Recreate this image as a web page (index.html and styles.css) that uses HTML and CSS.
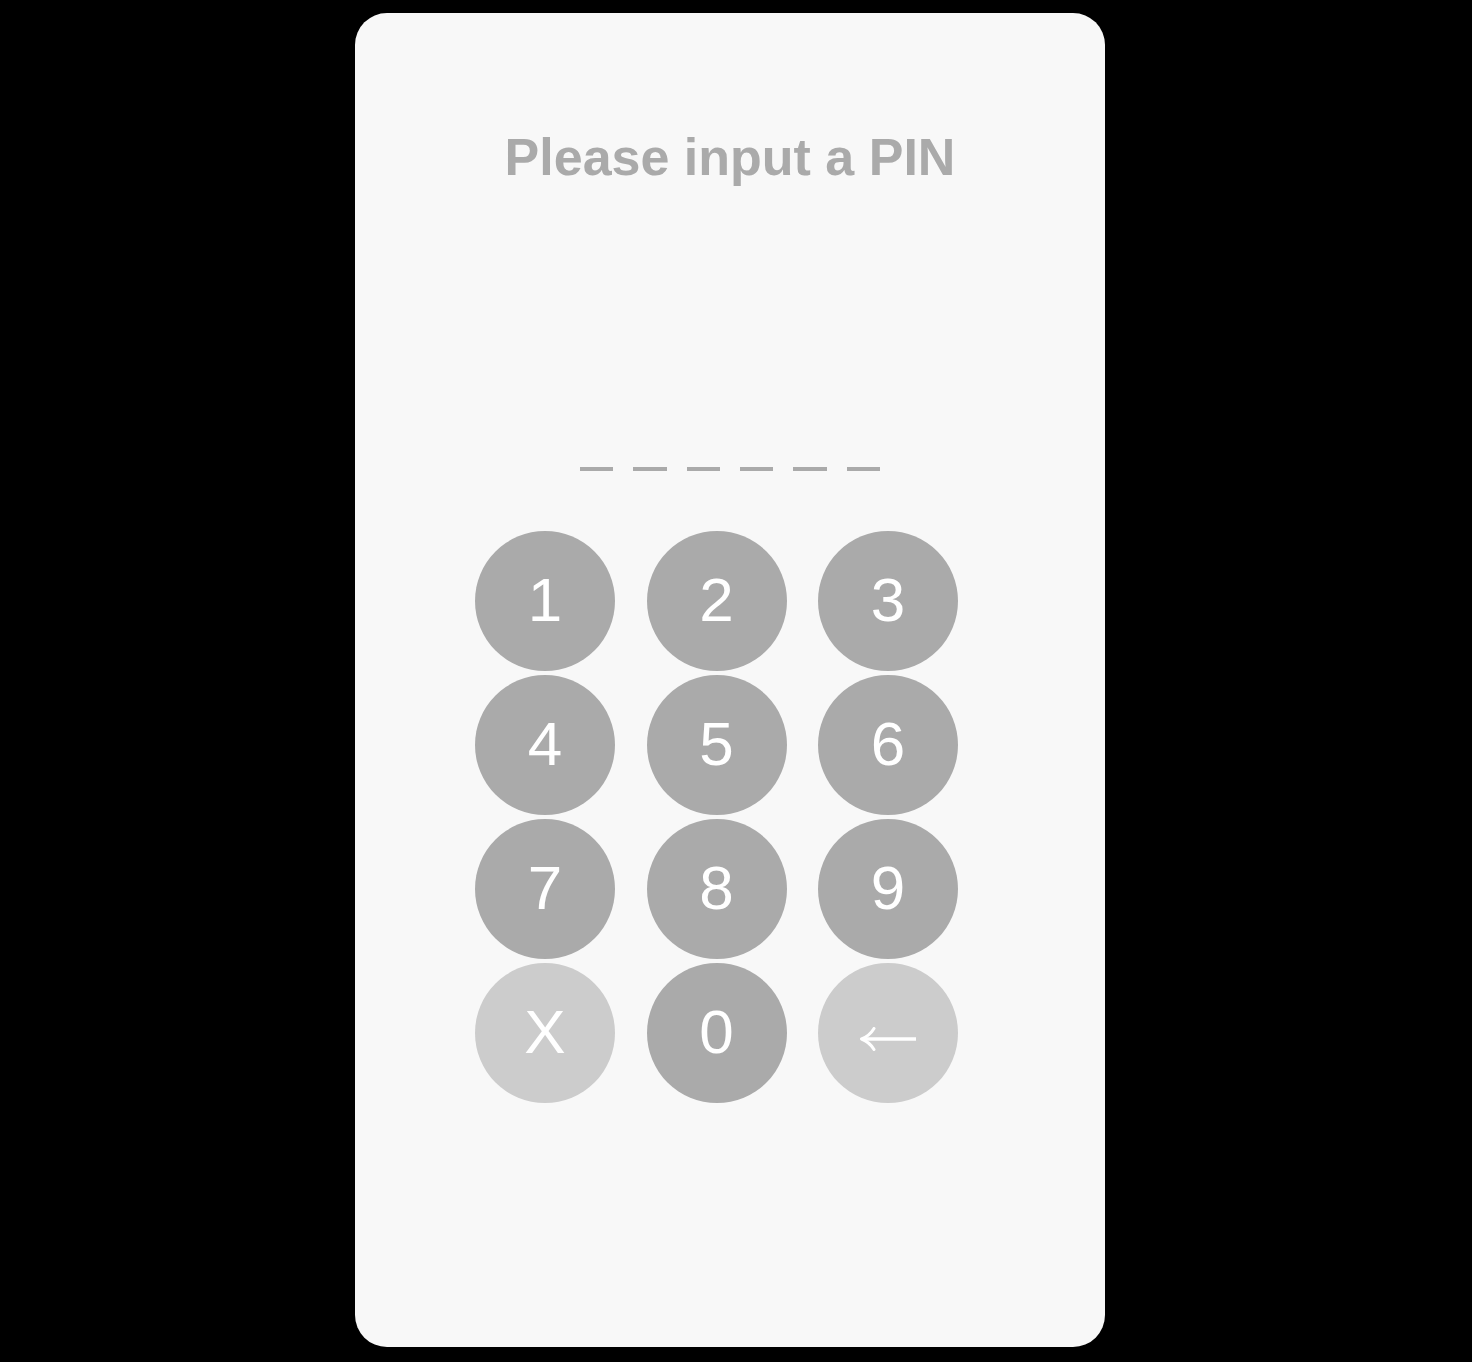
FILE: index.html
```html
<!DOCTYPE html>
<html lang="en">
<head>
<meta charset="utf-8">
<title>PIN</title>
<link rel="stylesheet" href="styles.css">
</head>
<body>
<div class="card">
  <h1 class="title">Please input a PIN</h1>
  <div class="pin">
    <span class="slot"></span>
    <span class="slot"></span>
    <span class="slot"></span>
    <span class="slot"></span>
    <span class="slot"></span>
    <span class="slot"></span>
  </div>
  <div class="keypad">
    <div class="key">1</div>
    <div class="key">2</div>
    <div class="key">3</div>
    <div class="key">4</div>
    <div class="key">5</div>
    <div class="key">6</div>
    <div class="key">7</div>
    <div class="key">8</div>
    <div class="key">9</div>
    <div class="key key-light">X</div>
    <div class="key">0</div>
    <div class="key key-light" aria-label="Backspace">
      <svg class="arrow" width="58" height="24" viewBox="0 0 58 24">
        <path d="M3.5 12 H57" stroke="#fff" stroke-width="3.5" fill="none"/>
        <path d="M15 1.5 Q10.5 9 2.5 12 Q10.5 15 15 22.5" stroke="#fff" stroke-width="3" fill="none" stroke-linecap="round" stroke-linejoin="round"/>
      </svg>
    </div>
  </div>
</div>
</body>
</html>
```
FILE: styles.css
```css
html, body {
  margin: 0;
  padding: 0;
  background: #000;
}
body {
  font-family: "Liberation Sans", Arial, sans-serif;
  padding-top: 13px;
}
.card {
  box-sizing: border-box;
  width: 750px;
  height: 1334px;
  margin-left: 355px;
  background: #f8f8f8;
  border-radius: 32px;
  padding-top: 114px;
  display: flex;
  flex-direction: column;
}
.title {
  margin: 0;
  font-size: 52px;
  line-height: 60px;
  font-weight: bold;
  color: #aaaaaa;
  text-align: center;
}
.pin {
  margin-top: 280px;
  display: flex;
  justify-content: center;
  gap: 20px;
  height: 4px;
}
.slot {
  width: 33.4px;
  height: 4px;
  background: #aaaaaa;
}
.keypad {
  margin-top: 60px;
  margin-left: 120px;
  display: grid;
  grid-template-columns: repeat(3, 140px);
  column-gap: 31.5px;
  row-gap: 4px;
}
.key {
  box-sizing: border-box;
  width: 140px;
  height: 140px;
  padding-bottom: 3px;
  border-radius: 50%;
  background: #aaaaaa;
  color: #fff;
  font-size: 62px;
  display: flex;
  align-items: center;
  justify-content: center;
}
.key-light {
  background: #cccccc;
}
.arrow {
  display: block;
  margin-top: 14px;
  margin-right: 1px;
}
```
